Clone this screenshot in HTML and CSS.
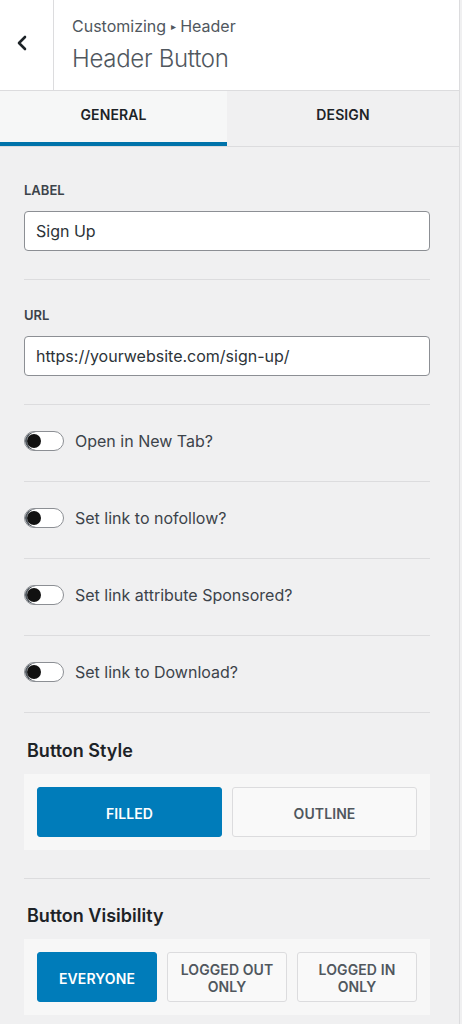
FILE: index.html
```html
<!DOCTYPE html>
<html lang="en">
<head>
<meta charset="utf-8">
<title>Header Button</title>
<link rel="stylesheet" href="styles.css">
</head>
<body>
<div class="panel">
  <header class="header">
    <div class="back">
      <svg width="12" height="16" viewBox="0 0 12 16" aria-hidden="true"><polyline points="9,2 3,8 9,14" fill="none" stroke="#1d2327" stroke-width="2.6" stroke-linecap="round" stroke-linejoin="round"/></svg>
    </div>
    <div class="titles">
      <div class="crumb">Customizing <span class="arrow">▸</span> Header</div>
      <div class="title">Header Button</div>
    </div>
  </header>
  <nav class="tabs">
    <div class="tab active">General</div>
    <div class="tab">Design</div>
  </nav>
  <main class="content">
    <section class="field first">
      <div class="label">Label</div>
      <div class="input">Sign Up</div>
    </section>
    <section class="field">
      <div class="label">URL</div>
      <div class="input">https://yourwebsite.com/sign-up/</div>
    </section>
    <section class="toggle-row"><span class="toggle"><span class="knob"></span></span><span class="toggle-text">Open in New Tab?</span></section>
    <section class="toggle-row"><span class="toggle"><span class="knob"></span></span><span class="toggle-text">Set link to nofollow?</span></section>
    <section class="toggle-row"><span class="toggle"><span class="knob"></span></span><span class="toggle-text">Set link attribute Sponsored?</span></section>
    <section class="toggle-row"><span class="toggle"><span class="knob"></span></span><span class="toggle-text">Set link to Download?</span></section>
    <section class="choice">
      <div class="heading">Button Style</div>
      <div class="group two">
        <div class="btn on">Filled</div>
        <div class="btn">Outline</div>
      </div>
    </section>
    <section class="choice last">
      <div class="heading">Button Visibility</div>
      <div class="group three">
        <div class="btn on">Everyone</div>
        <div class="btn">Logged out only</div>
        <div class="btn">Logged in only</div>
      </div>
    </section>
  </main>
</div>
</body>
</html>
```
FILE: styles.css
```css
* { box-sizing: border-box; }
html, body { margin: 0; padding: 0; }
body {
  background: #f0f0f1;
  font-family: Inter, "Noto Sans", "Liberation Sans", sans-serif;
  color: #3c434a;
}
.panel {
  width: 460px;
  min-height: 1024px;
  border-right: 1px solid #dcdcde;
  background: #f0f0f1;
}
.header {
  display: flex;
  height: 91px;
  background: #fff;
  border-bottom: 1px solid #dcdcde;
}
.back {
  width: 54px;
  border-right: 1px solid #dcdcde;
  display: flex;
  align-items: center;
  justify-content: center;
  padding-bottom: 4px;
  padding-right: 9px;
}
.titles {
  padding-left: 18px;
  padding-top: 16px;
}
.crumb {
  font-size: 16px;
  line-height: 20px;
  color: #50575e;
}
.arrow { font-size: 10px; position: relative; top: -2px; }
.title {
  margin-top: 7px;
  font-size: 24px;
  line-height: 28px;
  font-weight: 300;
  color: #50575e;
  letter-spacing: -0.3px;
}
.tabs {
  display: grid;
  grid-template-columns: 227px 1fr;
  height: 56px;
  border-bottom: 1px solid #dcdcde;
}
.tab {
  display: flex;
  align-items: center;
  justify-content: center;
  text-transform: uppercase;
  font-size: 14px;
  font-weight: 600;
  color: #1d2327;
  background: #f0f0f1;
  padding-bottom: 8px;
  letter-spacing: 0.1px;
}
.tab.active {
  background: #f6f7f7;
  box-shadow: inset 0 -4px 0 #0073aa;
}
.content { padding: 0 29px 0 24px; }
.field {
  padding: 27px 0 28px;
  border-bottom: 1px solid #dcdcde;
}
.field.first { padding-top: 35px; }
.label {
  font-size: 13px;
  line-height: 16px;
  font-weight: 600;
  text-transform: uppercase;
  color: #3c434a;
  margin-bottom: 13px;
}
.input {
  height: 40px;
  background: #fff;
  border: 1px solid #8c8f94;
  border-radius: 4px;
  padding: 0 11px;
  display: flex;
  align-items: center;
  font-size: 16px;
  color: #2c3338;
}
.toggle-row {
  display: flex;
  align-items: center;
  gap: 11px;
  padding: 26px 0 30px;
  border-bottom: 1px solid #dcdcde;
}
.toggle {
  width: 40px;
  height: 20px;
  border: 1px solid #8c8f94;
  border-radius: 10px;
  background: #fff;
  display: flex;
  align-items: center;
  padding-left: 2px;
  box-shadow: inset 2px 0 0 #50575e;
}
.knob {
  width: 14px;
  height: 14px;
  border-radius: 50%;
  background: #111;
}
.toggle-text {
  font-size: 16px;
  line-height: 20px;
  color: #3c434a;
}
.choice {
  padding: 27px 0 28px;
  border-bottom: 1px solid #dcdcde;
}
.choice.last { border-bottom: 0; padding-top: 26px; }
.heading {
  font-size: 18px;
  line-height: 22px;
  font-weight: 600;
  color: #1d2327;
  padding-left: 3px;
  margin-bottom: 12px;
}
.group {
  background: #f7f7f7;
  padding: 13px;
  display: grid;
  gap: 10px;
}
.group.two { grid-template-columns: 1fr 1fr; }
.group.three { grid-template-columns: 1fr 1fr 1fr; }
.btn {
  height: 50px;
  display: flex;
  align-items: center;
  justify-content: center;
  text-align: center;
  text-transform: uppercase;
  font-size: 14px;
  line-height: 17px;
  font-weight: 600;
  color: #50575e;
  background: #f9f9f9;
  border: 1px solid #dcdcde;
  border-radius: 3px;
  letter-spacing: 0.1px;
  padding: 2px 8px 0;
}
.btn.on {
  background: #007cba;
  border-color: #007cba;
  color: #fff;
}
```
